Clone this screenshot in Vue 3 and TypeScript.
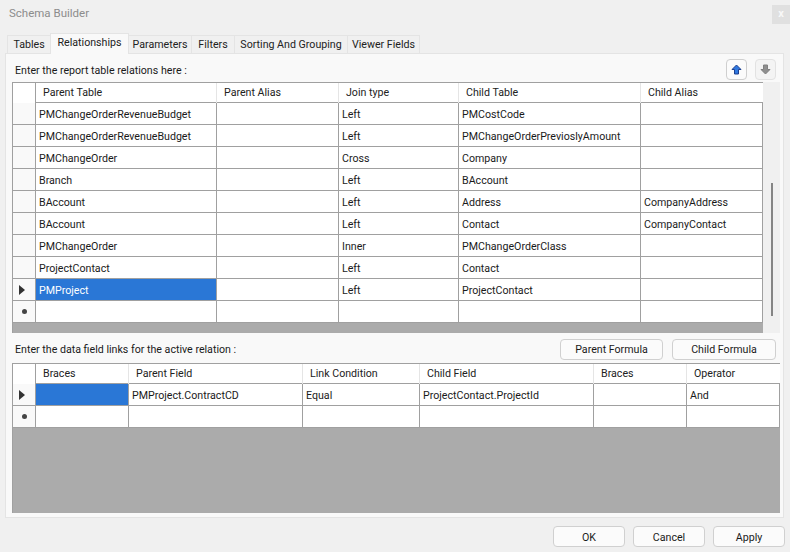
<script setup lang="ts">
const tabs = ['Tables', 'Relationships', 'Parameters', 'Filters', 'Sorting And Grouping', 'Viewer Fields']
const relHead = ['Parent Table', 'Parent Alias', 'Join type', 'Child Table', 'Child Alias']
const relRows: string[][] = [
  ['PMChangeOrderRevenueBudget', '', 'Left', 'PMCostCode', ''],
  ['PMChangeOrderRevenueBudget', '', 'Left', 'PMChangeOrderPrevioslyAmount', ''],
  ['PMChangeOrder', '', 'Cross', 'Company', ''],
  ['Branch', '', 'Left', 'BAccount', ''],
  ['BAccount', '', 'Left', 'Address', 'CompanyAddress'],
  ['BAccount', '', 'Left', 'Contact', 'CompanyContact'],
  ['PMChangeOrder', '', 'Inner', 'PMChangeOrderClass', ''],
  ['ProjectContact', '', 'Left', 'Contact', ''],
  ['PMProject', '', 'Left', 'ProjectContact', ''],
  ['', '', '', '', ''],
]
const linkHead = ['Braces', 'Parent Field', 'Link Condition', 'Child Field', 'Braces', 'Operator']
const linkRows: string[][] = [
  ['', 'PMProject.ContractCD', 'Equal', 'ProjectContact.ProjectId', '', 'And'],
  ['', '', '', '', '', ''],
]
</script>

<template>
  <div class="win">
    <div class="titlebar">
      <span class="title">Schema Builder</span>
      <span class="close">x</span>
    </div>
    <div class="tabs">
      <span v-for="(t, i) in tabs" :key="t" class="tab" :class="['t' + i, { on: i === 1 }]">{{ t }}</span>
    </div>
    <div class="panel">
      <div class="bar top">
        <span class="lbl">Enter the report table relations here :</span>
        <div class="icons">
          <button class="ico">
            <svg width="11" height="11" viewBox="0 0 11 11"><path d="M5.5 1 L10 5.5 H7.5 V10 H3.5 V5.5 H1 Z" fill="#2f78e0" stroke="#1c3f8f" stroke-width="1"/></svg>
          </button>
          <button class="ico dim">
            <svg width="11" height="11" viewBox="0 0 11 11"><path d="M5.5 10 L10 5.5 H7.5 V1 H3.5 V5.5 H1 Z" fill="#8f8f8f" stroke="#808080" stroke-width="1"/></svg>
          </button>
        </div>
      </div>
      <div class="relwrap">
        <div class="grid rel">
          <div class="row head">
            <div class="rh"></div>
            <div v-for="h in relHead" :key="h" class="hc">{{ h }}</div>
          </div>
          <div v-for="(r, i) in relRows" :key="i" class="row">
            <div class="rh">
              <svg v-if="i === 8" width="8" height="10" viewBox="0 0 8 10"><path d="M1 0 L7 5 L1 10 Z" fill="#333"/></svg>
              <span v-if="i === 9" class="dot"></span>
            </div>
            <div v-for="(c, j) in r" :key="j" class="c" :class="{ sel: i === 8 && j === 0 }">{{ c }}</div>
          </div>
          <div class="fill f1"></div>
        </div>
        <div class="sb"><div class="thumb"></div></div>
      </div>
      <div class="bar mid">
        <span class="lbl">Enter the data field links for the active relation :</span>
        <div class="fbtns">
          <button class="btn fb">Parent Formula</button>
          <button class="btn fb">Child Formula</button>
        </div>
      </div>
      <div class="grid link">
        <div class="row head">
          <div class="rh"></div>
          <div v-for="(h, k) in linkHead" :key="k" class="hc">{{ h }}</div>
        </div>
        <div v-for="(r, i) in linkRows" :key="i" class="row">
          <div class="rh">
            <svg v-if="i === 0" width="8" height="10" viewBox="0 0 8 10"><path d="M1 0 L7 5 L1 10 Z" fill="#333"/></svg>
            <span v-else class="dot"></span>
          </div>
          <div v-for="(c, j) in r" :key="j" class="c" :class="{ sel: i === 0 && j === 0 }">{{ c }}</div>
        </div>
        <div class="fill f2"></div>
      </div>
    </div>
    <div class="foot">
      <button class="btn fo">OK</button>
      <button class="btn fo">Cancel</button>
      <button class="btn fo">Apply</button>
    </div>
  </div>
</template>

<style>
html, body { margin: 0; background: #f0f0f0; }
</style>

<style scoped>
.win {
  width: 790px; height: 552px; background: #f0f0f0; overflow: hidden;
  font-family: Roboto, "Liberation Sans", sans-serif; font-size: 10.65px; color: #1a1a1a;
  display: flex; flex-direction: column;
}
.titlebar { height: 33px; display: flex; justify-content: space-between; align-items: flex-start; flex: none; }
.title { margin: 5px 0 0 9px; color: #8c8c8c; font-size: 11.5px; line-height: 17px; }
.close { margin-top: 5px; width: 18px; height: 19px; background: #e0e0e0; color: #f8f8f8; text-align: center; line-height: 18px; font-weight: 700; font-size: 11px; }
.tabs { height: 20px; display: flex; align-items: flex-end; padding-left: 8px; flex: none; position: relative; z-index: 1; }
.tab { height: 17px; line-height: 18px; background: #f0f0f0; border: 1px solid #e4e4e4; border-bottom: 0; box-sizing: content-box; text-align: center; margin-left: -1px; color: #222; white-space: nowrap; }
.t0 { width: 42px; } .t1 { width: 77px; } .t2 { width: 62px; } .t3 { width: 42px; } .t4 { width: 112px; } .t5 { width: 71px; }
.tab.on { height: 20px; line-height: 18px; background: #f9f9f9; margin-bottom: -1px; }
.panel { margin-left: 5px; width: 779px; height: 465px; box-sizing: border-box; background: #f9f9f9; border: 1px solid #e4e4e4; padding: 0 0 0 6px; flex: none; }
.bar { display: flex; justify-content: space-between; }
.top { height: 28px; align-items: flex-start; padding-right: 7px; }
.top .lbl { margin-top: 9px; }
.lbl { margin-left: 3px; line-height: 16px; }
.icons { display: flex; gap: 8px; margin-top: 5px; }
.ico { width: 21px; height: 21px; padding: 0; border: 1px solid #cfcfcf; border-radius: 4px; background: #fbfbfb; display: flex; align-items: center; justify-content: center; }
.ico.dim { border-color: #e2e2e2; background: #f4f4f4; }
.relwrap { display: flex; width: 768px; height: 251px; }
.grid { background: #ababab; border: 1px solid #a0a0a0; border-bottom: 0; border-right: 0; box-sizing: border-box; overflow: hidden; display: flex; flex-direction: column; }
.rel { width: 751px; height: 251px; }
.link { width: 768px; height: 150px; }
.row { display: grid; height: 22px; flex: none; background: #fff; box-sizing: border-box; border-bottom: 1px solid #a0a0a0; }
.rel .row { grid-template-columns: 23px 181px 122px 120px 182px 122px; }
.link .row { grid-template-columns: 23px 93px 174px 117px 174px 93px 93px; }
.row.head { height: 20px; }
.rh { border-right: 1px solid #a0a0a0; display: flex; align-items: center; justify-content: center; background: #f9f9f9; padding-right: 4px; box-sizing: border-box; }
.head .rh { background: #fff; }
.hc { padding-left: 7px; line-height: 20px; border-right: 1px solid #e5e5e5; box-sizing: border-box; white-space: nowrap; color: #222; }
.hc:last-child { border-right: 0; }
.c { padding-left: 3px; line-height: 23px; border-right: 1px solid #a0a0a0; box-sizing: border-box; white-space: nowrap; overflow: hidden; }
.c.sel { background: #2a77d6; color: #fff; border-right-color: #a0a0a0; }
.dot { width: 5px; height: 5px; border-radius: 50%; background: #444; margin-left: 4px; }
.fill { flex: 1; }
.sb { width: 17px; height: 251px; background: #f0f0f0; position: relative; }
.thumb { position: absolute; left: 8px; top: 101px; width: 2px; height: 133px; background: #858585; }
.mid { height: 30px; align-items: flex-start; padding-right: 7px; }
.mid .lbl { margin-top: 9px; }
.fbtns { display: flex; gap: 9px; margin-top: 6px; }
.btn { font: inherit; color: #1a1a1a; background: #fbfbfb; border: 1px solid #d0d0d0; border-radius: 4px; padding: 0; }
.fb { width: 104px; height: 21px; }
.fb:first-child { width: 103px; }
.foot { display: flex; gap: 8px; justify-content: flex-end; padding: 8px 5px 0 0; }
.fo { width: 72px; height: 21px; padding-top: 1px; }
</style>
